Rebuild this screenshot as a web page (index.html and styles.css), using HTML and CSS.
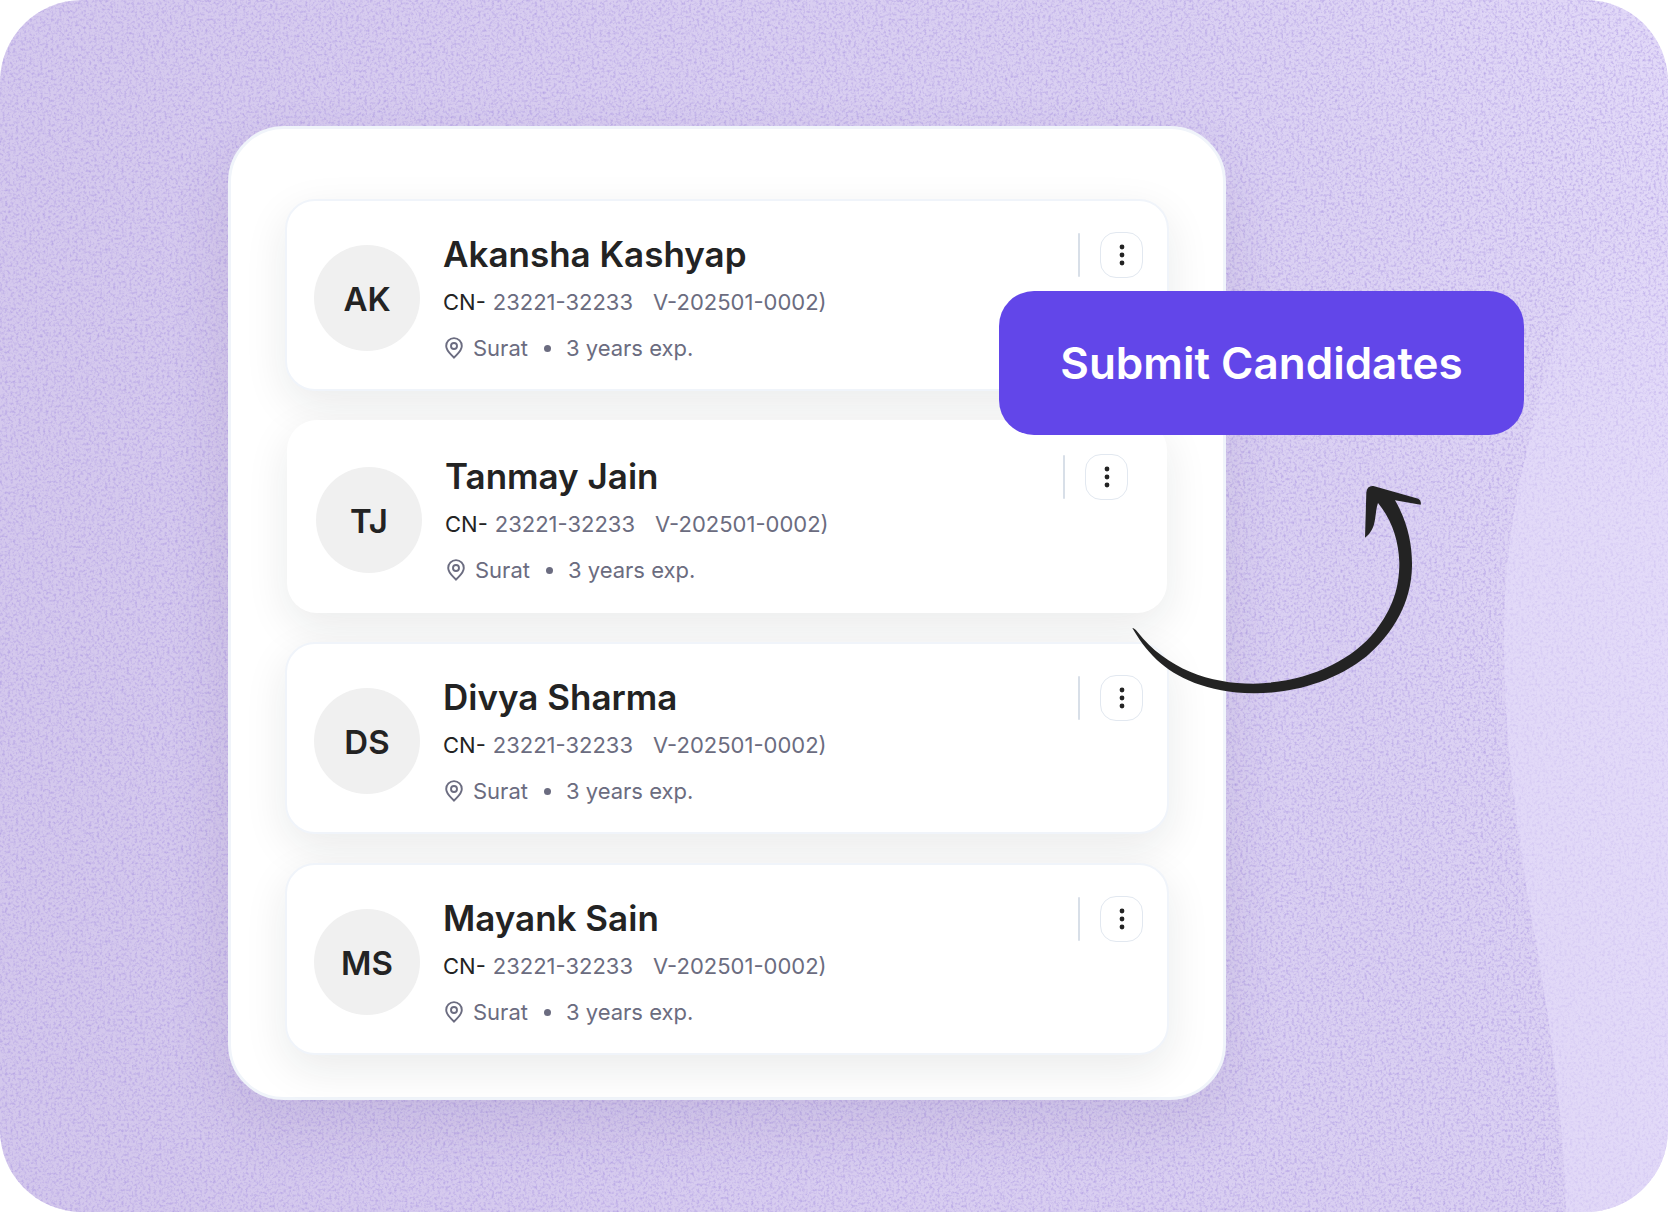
FILE: index.html
```html
<!DOCTYPE html>
<html lang="en">
<head>
    <meta charset="UTF-8">
    <meta name="viewport" content="width=device-width, initial-scale=1.0">
    <title>Submit Candidates</title>
    <link rel="stylesheet" href="styles.css">
</head>
<body>

<!-- shared icons -->
<svg class="sprite" aria-hidden="true">
    <symbol id="icon-pin" viewBox="0 0 18 22">
        <path d="M9 20.7C6.5 17.5 1.2 14 1.2 8.9a7.8 7.8 0 0 1 15.6 0C16.8 14 11.5 17.5 9 20.7z" fill="none" stroke="currentColor" stroke-width="1.9" stroke-linejoin="round"/>
        <circle cx="9" cy="9" r="3" fill="none" stroke="currentColor" stroke-width="1.9"/>
    </symbol>
    <symbol id="icon-dots" viewBox="0 0 6 22">
        <circle cx="3" cy="3" r="2.4" fill="currentColor"/>
        <circle cx="3" cy="11" r="2.4" fill="currentColor"/>
        <circle cx="3" cy="19" r="2.4" fill="currentColor"/>
    </symbol>
</svg>

<main class="stage">
    <svg class="grain" aria-hidden="true">
        <filter id="grain" x="0" y="0" width="100%" height="100%" color-interpolation-filters="sRGB">
            <feTurbulence type="fractalNoise" baseFrequency="0.37" numOctaves="2" seed="4"/>
            <feColorMatrix values="0 0 0 0 0.66  0 0 0 0 0.58  0 0 0 0 0.88  1.5 0 0 0 -0.67"/>
        </filter>
        <rect width="100%" height="100%" filter="url(#grain)"/>
    </svg>
    <svg class="wave" viewBox="0 0 168 1212" preserveAspectRatio="none" aria-hidden="true">
        <defs>
            <linearGradient id="wave-fill" x1="0" y1="0" x2="0" y2="1">
                <stop offset="0.1" stop-color="#e8e0ff" stop-opacity="0"/>
                <stop offset="0.36" stop-color="#e6defb" stop-opacity="0.55"/>
                <stop offset="1" stop-color="#e6defb" stop-opacity="0.55"/>
            </linearGradient>
        </defs>
        <path d="M168 120C120 190 50 320 27 450C10 520 4 580 4 640C4 740 18 840 33 925C50 1020 64 1120 66 1212H168z" fill="url(#wave-fill)"/>
    </svg>

    <div class="board">
        <section class="panel">
            <article class="card">
                <div class="avatar">AK</div>
                <div class="info">
                    <h2 class="name">Akansha Kashyap</h2>
                    <p class="codes"><span class="label">CN-</span><span>23221-32233</span><span class="version">V-202501-0002)</span></p>
                    <p class="meta"><svg class="pin"><use href="#icon-pin"/></svg><span>Surat</span><span class="dot"></span><span>3 years exp.</span></p>
                </div>
                <div class="actions">
                    <button class="menu-btn" type="button" aria-label="More"><svg class="dots"><use href="#icon-dots"/></svg></button>
                </div>
            </article>

            <article class="card selected">
                <div class="avatar">TJ</div>
                <div class="info">
                    <h2 class="name">Tanmay Jain</h2>
                    <p class="codes"><span class="label">CN-</span><span>23221-32233</span><span class="version">V-202501-0002)</span></p>
                    <p class="meta"><svg class="pin"><use href="#icon-pin"/></svg><span>Surat</span><span class="dot"></span><span>3 years exp.</span></p>
                </div>
                <div class="actions">
                    <button class="menu-btn" type="button" aria-label="More"><svg class="dots"><use href="#icon-dots"/></svg></button>
                </div>
            </article>

            <article class="card">
                <div class="avatar">DS</div>
                <div class="info">
                    <h2 class="name">Divya Sharma</h2>
                    <p class="codes"><span class="label">CN-</span><span>23221-32233</span><span class="version">V-202501-0002)</span></p>
                    <p class="meta"><svg class="pin"><use href="#icon-pin"/></svg><span>Surat</span><span class="dot"></span><span>3 years exp.</span></p>
                </div>
                <div class="actions">
                    <button class="menu-btn" type="button" aria-label="More"><svg class="dots"><use href="#icon-dots"/></svg></button>
                </div>
            </article>

            <article class="card">
                <div class="avatar">MS</div>
                <div class="info">
                    <h2 class="name">Mayank Sain</h2>
                    <p class="codes"><span class="label">CN-</span><span>23221-32233</span><span class="version">V-202501-0002)</span></p>
                    <p class="meta"><svg class="pin"><use href="#icon-pin"/></svg><span>Surat</span><span class="dot"></span><span>3 years exp.</span></p>
                </div>
                <div class="actions">
                    <button class="menu-btn" type="button" aria-label="More"><svg class="dots"><use href="#icon-dots"/></svg></button>
                </div>
            </article>
        </section>

        <button class="submit-btn" type="button">Submit Candidates</button>

        <svg class="arrow" viewBox="96 76 870 627" aria-hidden="true">
            <path d="M97 505Q103 505 112 516C200 628 330 672 460 672C620 668 752 606 826 514C878 446 898 385 898 310C896 240 875 180 834 130C826 150 828 185 818 205C810 222 803 228 795 234L799 98Q802 77 820 79L955 117Q965 123 962 135L885 122C925 190 937 260 936 320C934 430 880 520 800 590C700 670 570 702 460 701C320 698 228 654 170 600C135 566 118 540 97 505z" fill="#232323"/>
        </svg>
    </div>
</main>

</body>
</html>
```

FILE: styles.css
```css
* { box-sizing: border-box; }
body { margin: 0; background: #fff; font-family: Inter, "Liberation Sans", sans-serif; color: #232323; }
h2, p { margin: 0; }
button { font-family: inherit; cursor: pointer; }
.sprite { display: none; }

.stage {
    position: relative;
    overflow: hidden;
    min-height: 100vh;
    padding: 126px 442px 111px 228px;
    border-radius: 82px;
    background: linear-gradient(75deg, #d3c7ec 0%, #d8cdf0 45%, #dad0f2 75%, #e2d9f8 100%);
}
.wave { position: absolute; top: 0; right: 0; width: 168px; height: 100%; }
.grain { position: absolute; top: 0; left: 0; width: 100%; height: 100%; }

.board { position: relative; }
.panel {
    display: flex;
    flex-direction: column;
    gap: 29px;
    padding: 70px 54px 42px;
    background: #fff;
    border: 3px solid #f0f4fa;
    border-radius: 56px;
    box-shadow: 0 24px 60px rgba(70, 50, 110, 0.1);
}

.card {
    display: flex;
    align-items: center;
    padding: 31px 24px 27px 27px;
    background: #fff;
    border: 2px solid #f0f4fa;
    border-radius: 30px;
    box-shadow: 0 14px 44px rgba(20, 30, 30, 0.09);
}
.card.selected { margin: 0 2px; padding: 34px 39px 29px 29px; border: 0; }

.avatar {
    flex: none;
    width: 106px;
    height: 106px;
    margin-top: 1px;
    border-radius: 50%;
    background: #f0f0f0;
    font-size: 33px;
    font-weight: 600;
    line-height: 108px;
    text-align: center;
}
.info { flex: 1; margin-left: 23px; padding-top: 1px; }
.name { font-size: 35px; font-weight: 600; line-height: 42px; }
.codes, .meta { display: flex; align-items: center; font-size: 22px; line-height: 28px; color: #6b6c80; }
.codes { margin-top: 13px; }
.codes .label { margin-right: 7px; color: #232323; }
.codes .version { margin-left: 20px; }
.meta { margin-top: 18px; }
.pin { width: 18px; height: 22px; margin: 0 10px 0 2px; }
.dot { width: 7px; height: 7px; margin: 0 15px 0 16px; border-radius: 50%; background: #6b6c80; }

.actions { display: flex; align-self: flex-start; align-items: center; }
.actions::before { content: ""; width: 2px; height: 44px; margin-right: 20px; border-radius: 1px; background: #d8dfe8; }
.menu-btn {
    display: flex;
    align-items: center;
    justify-content: center;
    width: 43px;
    height: 46px;
    padding: 0;
    background: #fff;
    border: 1px solid #e2e8f0;
    border-radius: 16px;
    color: #232323;
}
.dots { width: 6px; height: 22px; }

.submit-btn {
    position: absolute;
    top: 165px;
    right: -298px;
    width: 525px;
    height: 144px;
    border: 0;
    border-radius: 35px;
    background: #6246e9;
    color: #fff;
    font-size: 44px;
    font-weight: 600;
}
.arrow { position: absolute; top: 359px; right: -196px; width: 290px; height: 209px; }
```
